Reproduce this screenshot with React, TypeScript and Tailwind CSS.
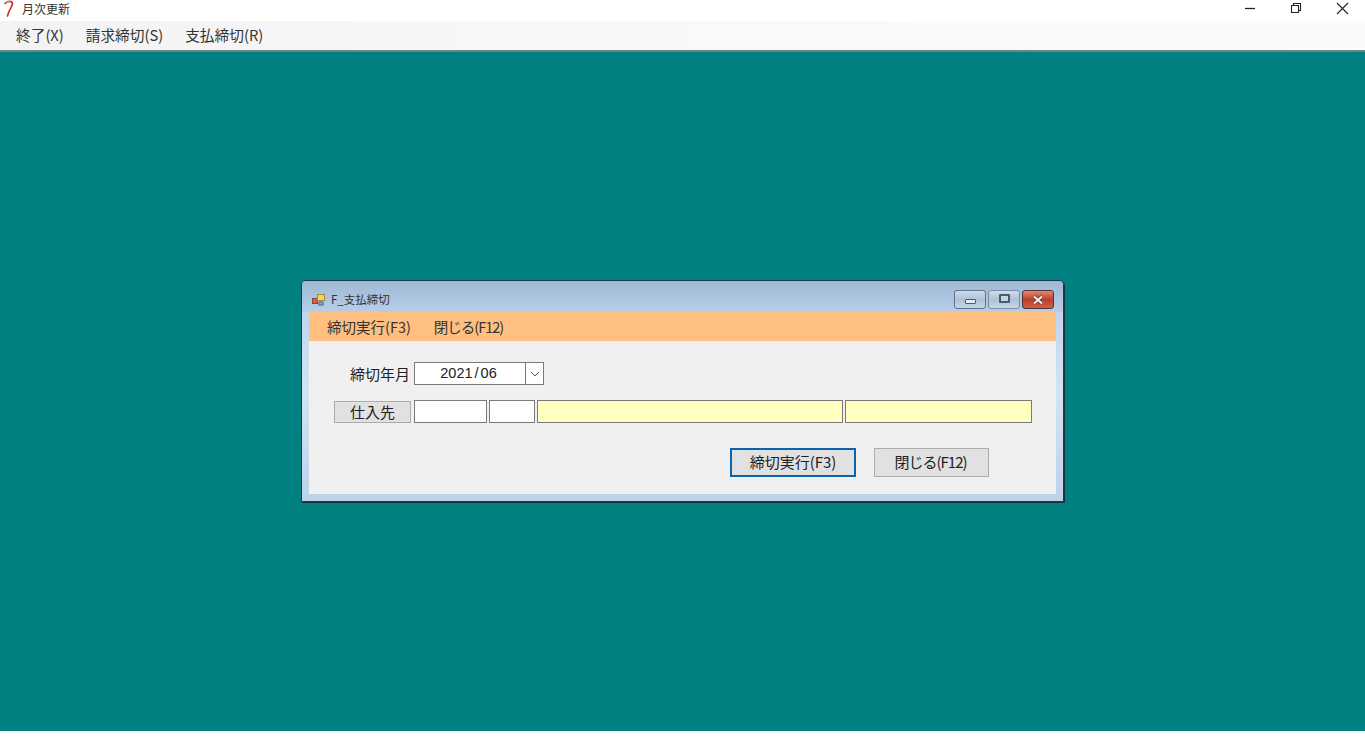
// 月次更新 - 支払締切 MDI window

const font = "font-['Noto_Sans_CJK_JP','Noto_Sans',sans-serif]";

function AppIcon() {
  return (
    <svg width="12" height="18" viewBox="0 0 12 18" className="ml-[3px] mt-[-3px]">
      <path d="M2 3.5C4 .8 9 .5 9.5 3.5 9.8 6 6 9 4.5 16" fill="none" stroke="#c8302c" strokeWidth="1.6" strokeLinecap="round" />
      <path d="M3 2.5C5 1.5 7.5 1.5 8 3" fill="none" stroke="#e9a39a" strokeWidth="1" />
    </svg>
  );
}

function TitleBar() {
  return (
    <div className="flex h-[21px] items-center bg-white">
      <AppIcon />
      <span className="ml-[7px] mt-[-4px] text-[12px] leading-none text-[#333]">月次更新</span>
      <div className="ml-auto flex items-center">
        <svg width="12" height="12" viewBox="0 0 12 12" className="mr-[34px] mt-[-5px]">
          <path d="M1 6.5h10" stroke="#222" strokeWidth="1.3" />
        </svg>
        <svg width="12" height="12" viewBox="0 0 12 12" className="mr-[34px] mt-[-5px]">
          <path d="M1.5 3.5h7v7h-7zM3.5 3.5v-2h7v7h-2" fill="none" stroke="#222" strokeWidth="1.1" />
        </svg>
        <svg width="13" height="13" viewBox="0 0 13 13" className="mr-[16px] mt-[-5px]">
          <path d="M1 1l11 11M12 1L1 12" stroke="#222" strokeWidth="1.1" />
        </svg>
      </div>
    </div>
  );
}

function MenuBar() {
  return (
    <div className="flex h-[29px] items-center gap-[22px] bg-gradient-to-r from-[#f3f3f3] via-[#f9f9f9] to-[#fbfbfb] pl-[16px] text-[14.7px] text-[#333]">
      <span>終了(X)</span>
      <span>請求締切(S)</span>
      <span>支払締切(R)</span>
    </div>
  );
}

function ChildIcon() {
  return (
    <svg width="13" height="12" viewBox="0 0 13 12" className="mt-[6px]">
      <rect x="0.5" y="4.5" width="5" height="5" fill="#e8563c" stroke="#7a4a3a" />
      <rect x="5.5" y="0.5" width="7" height="6" fill="#f7d653" stroke="#a58a38" />
      <rect x="7" y="8" width="4" height="3" fill="#7fa8dc" stroke="#4a6a9a" />
    </svg>
  );
}

function CaptionButtons() {
  return (
    <div className="flex gap-[2px]">
      <div className="flex h-[19px] w-[32px] items-center justify-center rounded-[3px] border border-[#5f7488] bg-gradient-to-b from-[#cfdcea] via-[#afc2d6] to-[#c4d5e6]">
        <div className="mt-[4px] h-[5px] w-[11px] rounded-[1px] border border-[#4a5a6c] bg-[#e4eaf1]" />
      </div>
      <div className="flex h-[19px] w-[32px] items-center justify-center rounded-[3px] border border-[#7a8da0] bg-gradient-to-b from-[#cfdcea] via-[#afc2d6] to-[#c4d5e6]">
        <div className="mt-[-2px] h-[9px] w-[11px] rounded-[1px] border-2 border-[#4a5a6c] bg-[#c8d4e0]" />
      </div>
      <div className="flex h-[19px] w-[32px] items-center justify-center rounded-[3px] border border-[#5a3030] bg-gradient-to-b from-[#dc8a78] via-[#bd3f2a] to-[#c9604c]">
        <svg width="12" height="10" viewBox="0 0 12 10">
          <path d="M2 1.5l8 7M10 1.5l-8 7" stroke="#5a2a22" strokeWidth="3.4" />
          <path d="M2 1.5l8 7M10 1.5l-8 7" stroke="#f4ece8" strokeWidth="2.2" />
        </svg>
      </div>
    </div>
  );
}

function ChildWindow() {
  return (
    <div className="ml-[301px] mt-[228px] w-[763px] rounded-t-[5px] border border-[#1c3a48] bg-gradient-to-b from-[#b9d1ea] via-[#d3e3f4] to-[#bdd3ea] shadow-[1px_1px_0_#12343c]">
      <div className="flex h-[31px] rounded-t-[4px] bg-gradient-to-b from-[#9fb8d4] to-[#b7cee7] pl-[10px] pr-[9px]">
        <div className="flex items-center">
          <ChildIcon />
          <span className="ml-[6px] mt-[6px] text-[11.5px] leading-none text-[#333]">F_支払締切</span>
        </div>
        <div className="ml-auto mt-[9px]">
          <CaptionButtons />
        </div>
      </div>
      <div className="mb-[7px] ml-[7px] mr-[7px]">
        <div className="flex h-[29px] items-center gap-[23px] bg-[#ffbf80] pl-[18px] text-[14.5px] text-[#333]">
          <span>締切実行(F3)</span>
          <span className="tracking-[-1px]">閉じる(F12)</span>
        </div>
        <div className="flex h-[153px] flex-col bg-[#f0f0f0] text-[15px] text-[#222]">
          <div className="mt-[21px] flex h-[23px] items-center">
            <span className="ml-[41px] w-[64px] leading-none">締切年月</span>
            <div className="flex h-[23px] w-[130px] border border-[#7a7a7a] bg-white">
              <span className="flex flex-1 items-center justify-center pr-[3px] font-['Liberation_Sans',sans-serif] text-[14.5px] leading-none">
                2021<span className="w-[8px] text-center">/</span>06
              </span>
              <div className="flex w-[18px] items-center justify-center border-l border-[#7a7a7a]">
                <svg width="10" height="6" viewBox="0 0 10 6">
                  <path d="M1 1l4 4 4-4" fill="none" stroke="#555" strokeWidth="1" />
                </svg>
              </div>
            </div>
          </div>
          <div className="mt-[15px] flex h-[23px] items-start">
            <div className="ml-[25px] mt-[1px] flex h-[22px] w-[77px] items-center justify-center border border-[#adadad] bg-[#e1e1e1] pb-[2px] leading-none">仕入先</div>
            <div className="ml-[3px] h-[23px] w-[73px] border border-[#7a7a7a] bg-white" />
            <div className="ml-[2px] h-[23px] w-[46px] border border-[#7a7a7a] bg-white" />
            <div className="ml-[2px] h-[23px] w-[306px] border border-[#7a7a7a] bg-[#ffffc0]" />
            <div className="ml-[2px] h-[23px] w-[187px] border border-[#7a7a7a] bg-[#ffffc0]" />
          </div>
          <div className="mt-[25px] flex items-center">
            <div className="ml-[421px] flex h-[29px] w-[126px] items-center justify-center border-2 border-[#0a64ad] bg-[#e1e1e1] pb-[2px] leading-none">締切実行(F3)</div>
            <div className="ml-[18px] flex h-[29px] w-[115px] items-center justify-center border border-[#adadad] bg-[#e1e1e1] pb-[2px] pr-[2px] leading-none tracking-[-1px]">閉じる(F12)</div>
          </div>
        </div>
      </div>
    </div>
  );
}

export default function App() {
  return (
    <div className={`flex h-[738px] w-[1365px] flex-col overflow-hidden bg-white ${font}`}>
      <TitleBar />
      <MenuBar />
      <div className="h-[681px] border-t-2 border-t-[#6f8583] bg-[#008080]">
        <div className="flow-root">
          <ChildWindow />
        </div>
      </div>
    </div>
  );
}
